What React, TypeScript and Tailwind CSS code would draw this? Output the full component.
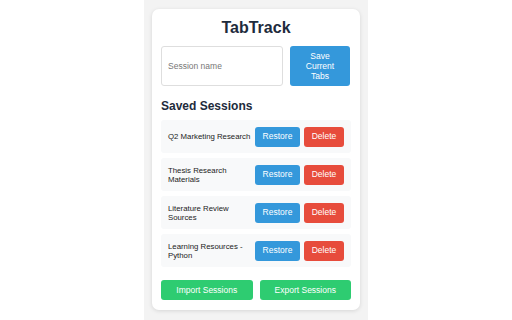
import React from "react";

const sessions = [
  "Q2 Marketing Research",
  "Thesis Research Materials",
  "Literature Review Sources",
  "Learning Resources - Python",
];

export default function App() {
  return (
    <div className="w-full h-[320px] bg-white flex justify-center" style={{ fontFamily: '"Liberation Sans", Arial, sans-serif' }}>
      <div className="w-[224px] h-[320px] bg-[#f3f3f3] px-[8px] pt-[9px]">
        <div className="bg-white rounded-[7px] shadow-[0_1px_4px_rgba(0,0,0,0.12)] px-[9px] pt-[10px] pb-[10px] h-[301px] flex flex-col">
          <h1 className="text-center text-[16px] leading-[18px] font-bold text-[#1e2b3c]">TabTrack</h1>
          <div className="flex gap-[7px] mt-[9px]">
            <input
              placeholder="Session name"
              className="w-[122px] h-[40px] border border-[#dedede] rounded-[3px] px-[6px] text-[8.5px] text-[#333] placeholder:text-[#777] outline-none"
            />
            <button className="w-[60px] h-[40px] bg-[#3498db] rounded-[3px] text-white text-[8.5px] leading-[10px] px-[8px]">
              Save Current Tabs
            </button>
          </div>
          <h2 className="mt-[13px] text-[12px] leading-[14px] font-bold text-[#1e2b3c]">Saved Sessions</h2>
          <div className="mt-[7px] flex flex-col gap-[5px]">
            {sessions.map((s) => (
              <div key={s} className="h-[33px] bg-[#f8f9fa] rounded-[3px] flex items-center pl-[7px] pr-[7px] gap-[4px]">
                <div className="flex-1 text-[7.8px] leading-[9px] text-[#222]">{s}</div>
                <button className="w-[45px] h-[20px] bg-[#3498db] rounded-[3px] text-white text-[8.5px]">Restore</button>
                <button className="w-[40px] h-[20px] bg-[#e74c3c] rounded-[3px] text-white text-[8.5px]">Delete</button>
              </div>
            ))}
          </div>
          <div className="mt-auto flex gap-[7px]">
            <button className="flex-1 h-[20px] bg-[#2ecc71] rounded-[3px] text-white text-[8.5px]">Import Sessions</button>
            <button className="flex-1 h-[20px] bg-[#2ecc71] rounded-[3px] text-white text-[8.5px]">Export Sessions</button>
          </div>
        </div>
      </div>
    </div>
  );
}
